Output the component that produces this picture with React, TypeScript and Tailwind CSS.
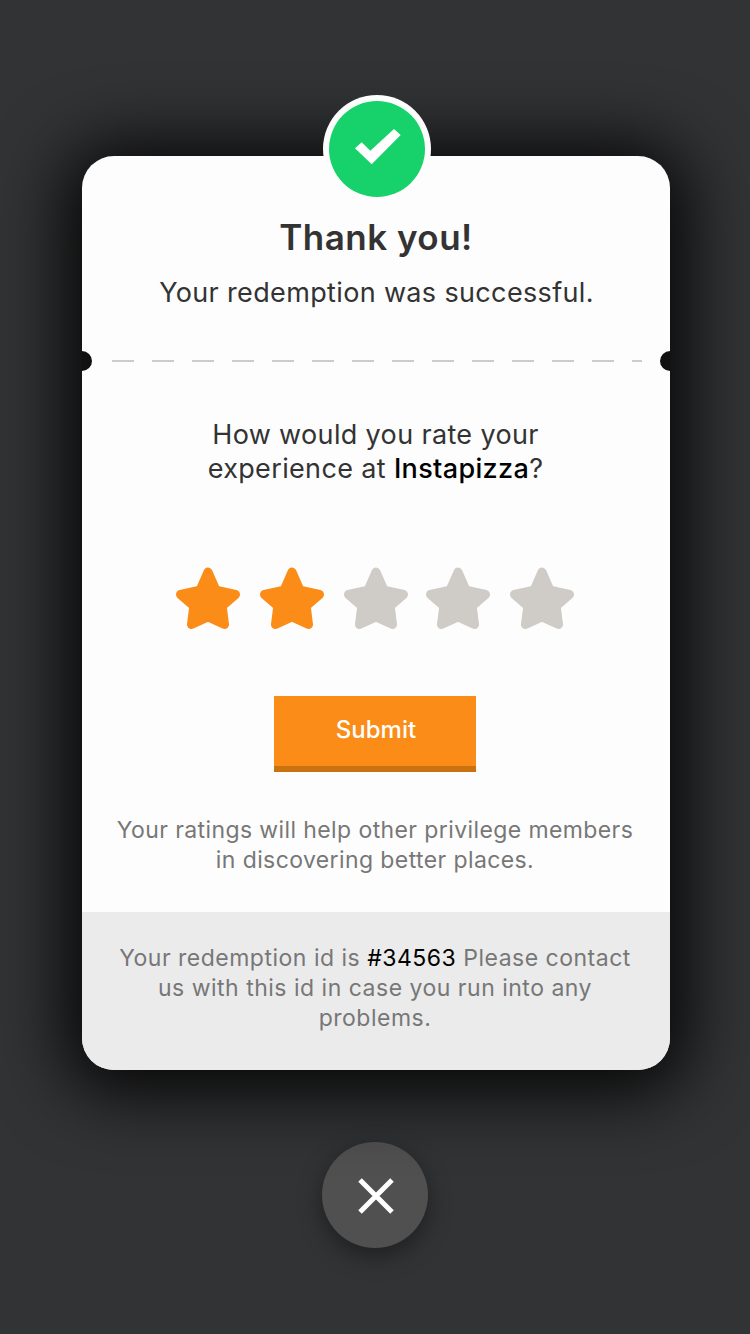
const starPoints = "33,5 41,23.2 60.5,27.5 47.2,39 49.5,57.5 33,49.8 16.5,57.5 18.8,39 5.5,27.5 25,23.2";

function Star({ on, tight }: { on: boolean; tight: boolean }) {
  return (
    <svg width="66" height="64" viewBox="0 0 66 64" className={`${on ? "text-[#fb8c17]" : "text-[#cfccc7]"} ${tight ? "-ml-[2px]" : ""}`}>
      <polygon points={starPoints} fill="currentColor" stroke="currentColor" strokeWidth="9" strokeLinejoin="round" />
    </svg>
  );
}

export default function App() {
  return (
    <div className="min-h-[1334px] w-[750px] overflow-hidden bg-[#323335] pt-[156px] font-['Inter','Liberation_Sans',sans-serif]">
      <div className="relative ml-[82px] flex h-[914px] w-[588px] flex-col rounded-[32px] bg-[#fdfdfd] shadow-[0_6px_70px_16px_rgba(0,0,0,0.92)]">
        <div className="absolute left-[241px] top-[-61px] flex h-[108px] w-[108px] items-center justify-center rounded-full bg-[#fdfdfd]">
          <div className="h-[96px] w-[96px] rounded-full bg-[#17d26a]">
            <svg width="96" height="96" viewBox="0 0 96 96">
              <polygon points="26,47.3 32.7,41.3 41.3,49.7 65,28 71.7,34 42.7,63.3" fill="#fff" />
            </svg>
          </div>
        </div>

        <h1 className="mt-[59px] text-center text-[35px] font-semibold leading-[44px] tracking-[0.5px] text-[#333]">Thank you!</h1>
        <p className="mt-[17px] pl-[1px] text-center text-[27px] leading-[34px] tracking-[0.35px] text-[#333]">Your redemption was successful.</p>

        <div className="relative mt-[41px] h-[20px] w-full">
          <div className="absolute left-0 top-0 h-[20px] w-[10px] rounded-r-full bg-[#111]" />
          <div className="absolute right-0 top-0 h-[20px] w-[10px] rounded-l-full bg-[#111]" />
          <div className="ml-[30px] flex h-[20px] w-[530px] items-center gap-[18px] overflow-hidden">
            {Array.from({ length: 14 }).map((_, i) => (
              <div key={i} className="h-[2px] w-[22px] shrink-0 bg-[#ccc]" />
            ))}
          </div>
        </div>

        <p className="mt-[47px] pr-[1px] text-center text-[27px] leading-[34px] tracking-[0.35px] text-[#333]">
          How would you rate your
          <br />
          experience at <span className="font-medium text-black">Instapizza</span>?
        </p>

        <div className="mt-[81px] flex justify-center gap-[18px] pr-[2px]">
          {[true, true, false, false, false].map((on, i) => (
            <Star key={i} on={on} tight={i === 3} />
          ))}
        </div>

        <button className="ml-[192px] mt-[65px] h-[76px] w-[202px] border-b-[6px] border-[#c9720f] bg-[#fb8c17] pb-[2px] pl-[2px] text-[24px] font-medium text-white">
          Submit
        </button>

        <p className="mt-[43px] pr-[2px] text-center text-[23px] leading-[30px] tracking-[0.4px] text-[#777]">
          Your ratings will help other privilege members
          <br />
          in discovering better places.
        </p>

        <div className="mt-auto flex h-[158px] items-start justify-center rounded-b-[32px] bg-[#ebebeb] pt-[31px] text-center text-[23px] leading-[30px] tracking-[0.5px] text-[#777]">
          <p className="pr-[2px]">
            Your redemption id is <span className="text-black">#34563</span> Please contact
            <br />
            us with this id in case you run into any
            <br />
            problems.
          </p>
        </div>
      </div>

      <div className="ml-[322px] mt-[72px] flex h-[106px] w-[106px] items-center justify-center rounded-full bg-[#505050] shadow-[0_8px_24px_rgba(0,0,0,0.4)]">
        <svg width="38" height="38" viewBox="0 0 38 38" className="ml-[2px] mt-[2px]">
          <path d="M3 3 L35 35 M35 3 L3 35" stroke="#fff" strokeWidth="5" fill="none" />
        </svg>
      </div>
    </div>
  );
}
